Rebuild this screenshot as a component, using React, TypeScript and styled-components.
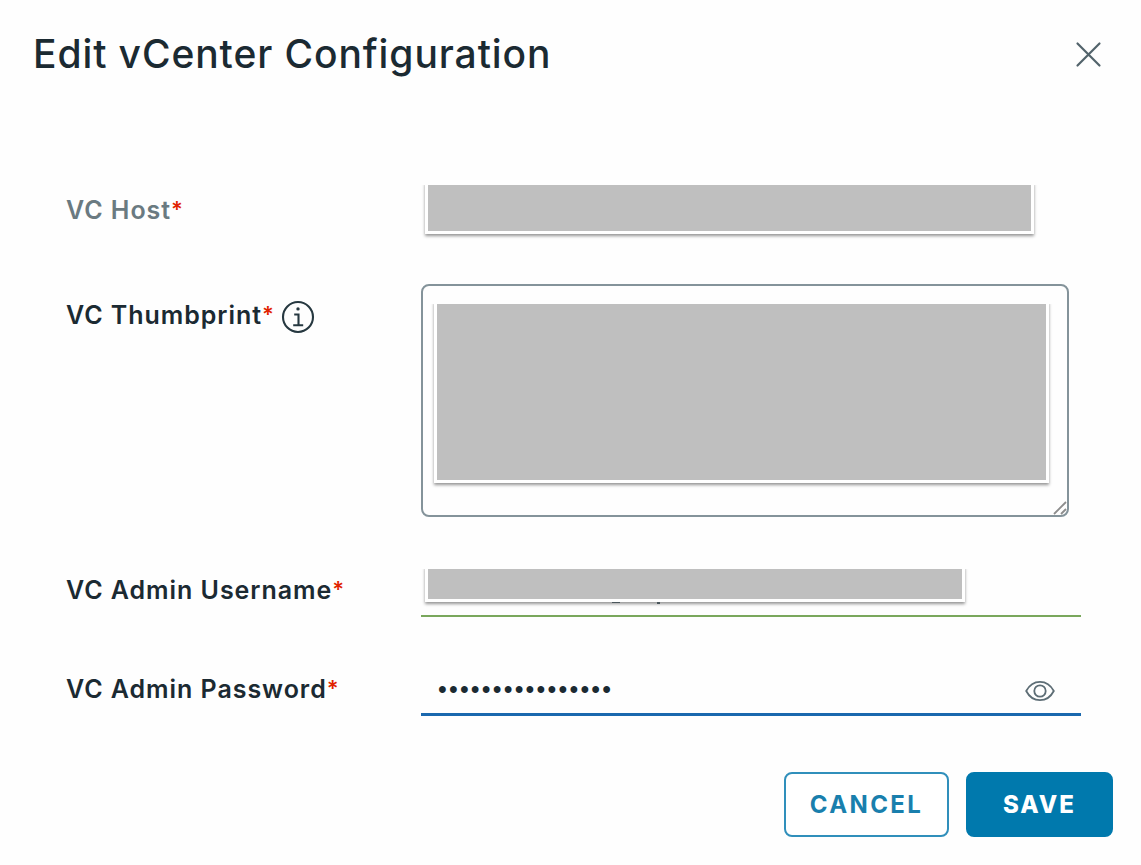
import React from 'react';
import styled, { createGlobalStyle } from 'styled-components'

interface LabelProps {
  text: string
  muted?: boolean
  children?: any
}

const GlobalStyle = createGlobalStyle`
  * {
    box-sizing: border-box;
  }
  body {
    margin: 0;
    background: #fefefe;
    font-family: Inter, 'Liberation Sans', sans-serif;
    color: #1b2a32;
  }
`;

const Dialog = styled.div`
  display: flex;
  flex-direction: column;
  width: 1141px;
  height: 865px;
  overflow: hidden;
`;

const Header = styled.header`
  display: flex;
  justify-content: space-between;
  align-items: center;
  height: 108px;
  padding: 0 39px 0 33px;
`;

const Title = styled.h1`
  margin: 0;
  font-size: 39px;
  font-weight: 500;
  line-height: 48px;
  letter-spacing: 0.9px;
  white-space: nowrap;
`;

const CloseButton = styled.button`
  display: flex;
  padding: 0;
  border: 0;
  background: none;
`;

const Form = styled.form`
  display: grid;
  grid-template-columns: 355px 660px;
  grid-template-rows: 102px 282px 99px 99px;
  padding: 74px 0 0 66px;
`;

const LabelBox = styled.div<any>`
  display: flex;
  align-items: center;
  height: 32px;
  margin-top: ${({ top }: any) => top}px;
`;

const Label = styled.label<any>`
  font-size: 25px;
  font-weight: 600;
  line-height: 32px;
  white-space: nowrap;
  letter-spacing: 0.95px;
  color: ${({ $muted }: any) => $muted ? "#6a7a81" : "#1b2a32"};
`;

const Required = styled.span`
  font-size: 22px;
  line-height: 1;
  vertical-align: 2px;
  letter-spacing: 0;
  color: #e12200;
`;

const InfoIcon = styled.svg`
  margin: 4px 0 0 7px;
`;

const Redacted = styled.div<any>`
  position: relative;
  width: ${({ $width }: any) => $width}px;
  height: ${({ $height }: any) => $height}px;
  border: 3px solid #fff;
  background: #bfbfbf;
  box-shadow: 0 2px 3px rgba(0, 0, 0, 0.42);
  clip-path: inset(3px -5px -7px -5px);
`;

const HostValue = styled.div`
  padding-left: 4px;
`;

const ThumbprintArea = styled.div`
  position: relative;
  width: 648px;
  height: 233px;
  padding: 15px 11px;
  border: 2px solid #84939a;
  border-radius: 8px;
`;

const ResizeHandle = styled.svg`
  position: absolute;
  right: 0;
  bottom: 0;
`;

const UsernameValue = styled.div`
  height: 51px;
  padding-left: 4px;
  border-bottom: 2px solid #79a75c;
`;

const Descender = styled.i<any>`
  position: absolute;
  top: 33px;
  left: ${({ $left }: any) => $left}px;
  width: ${({ $width }: any) => $width}px;
  height: ${({ $height }: any) => $height || 1}px;
  background: #4b565c;
`;

const PasswordValue = styled.div`
  display: flex;
  justify-content: space-between;
  align-items: center;
  height: 51px;
  padding: 3px 26px 0 17px;
  border-bottom: 3px solid #1a68ae;
`;

const Dots = styled.span`
  margin-bottom: 3px;
  font-family: 'Liberation Sans', sans-serif;
  font-size: 25px;
  line-height: 30px;
  letter-spacing: 2.2px;
`;

const Footer = styled.footer`
  display: flex;
  justify-content: flex-end;
  gap: 17px;
  margin-top: 8px;
  padding-right: 28px;
`;

const Button = styled.button<any>`
  width: ${({ $primary }: any) => $primary ? "147px" : "165px"};
  height: 65px;
  padding: 0;
  border: 2px solid ${({ $primary }: any) => $primary ? "#0079ad" : "#308fbb"};
  border-radius: 8px;
  background: ${({ $primary }: any) => $primary ? "#0079ad" : "#fff"};
  color: ${({ $primary }: any) => $primary ? "#fff" : "#197fad"};
  font-family: inherit;
  font-size: 24px;
  font-weight: ${({ $primary }: any) => $primary ? 800 : 650};
  letter-spacing: ${({ $primary }: any) => $primary ? 2 : 2.4}px;
`;

const FieldLabel = ({ text, muted, children }: LabelProps) => (
  <>
    <Label $muted={muted}>{text}<Required>*</Required></Label>
    {children}
  </>
)

const App = () => (
  <Dialog>
    <GlobalStyle />
    <Header>
      <Title>Edit vCenter Configuration</Title>
      <CloseButton type="button" aria-label="Close">
        <svg width="27" height="27" viewBox="0 0 27 27" stroke="#52636b" strokeWidth="2.2" strokeLinecap="round">
          <path d="M2.5 2.5 24.5 24.5M24.5 2.5 2.5 24.5" />
        </svg>
      </CloseButton>
    </Header>
    <Form>
      <LabelBox top={12}><FieldLabel text="VC Host" muted /></LabelBox>
      <HostValue><Redacted $width={609} $height={52} /></HostValue>

      <LabelBox top={15}>
        <FieldLabel text="VC Thumbprint">
          <InfoIcon width="34" height="34" viewBox="0 0 34 34" fill="none" stroke="#263840" strokeWidth="2.1">
            <circle cx="17" cy="17" r="15" />
            <path d="M13.2 14.5H17.5V25.3M12.2 25.3H22.2" />
            <circle cx="17" cy="8.9" r="1.7" fill="#263840" stroke="none" />
          </InfoIcon>
        </FieldLabel>
      </LabelBox>
      <ThumbprintArea>
        <Redacted $width={615} $height={182} />
        <ResizeHandle width="14" height="14" viewBox="0 0 14 14" stroke="#8d8d8d" strokeWidth="1.8">
          <path d="M1 13 13 1M8 13 13 8" />
        </ResizeHandle>
      </ThumbprintArea>

      <LabelBox top={8}><FieldLabel text="VC Admin Username" /></LabelBox>
      <UsernameValue>
        <Redacted $width={540} $height={36}>
          <Descender $left={184} $width={8} />
          <Descender $left={229} $width={3} $height={2} />
        </Redacted>
      </UsernameValue>

      <LabelBox top={8}><FieldLabel text="VC Admin Password" /></LabelBox>
      <PasswordValue>
        <Dots>••••••••••••••••</Dots>
        <svg width="30" height="22" viewBox="0 0 30 22" fill="none" stroke="#5d6d75" strokeWidth="1.8">
          <path d="M1.2 11C4.5 4.7 9.3 1.8 15 1.8S25.5 4.7 28.8 11C25.5 17.3 20.7 20.2 15 20.2S4.5 17.3 1.2 11Z" />
          <circle cx="15" cy="11" r="5.7" />
        </svg>
      </PasswordValue>
    </Form>
    <Footer>
      <Button type="button">CANCEL</Button>
      <Button type="button" $primary>SAVE</Button>
    </Footer>
  </Dialog>
)

export default App;
